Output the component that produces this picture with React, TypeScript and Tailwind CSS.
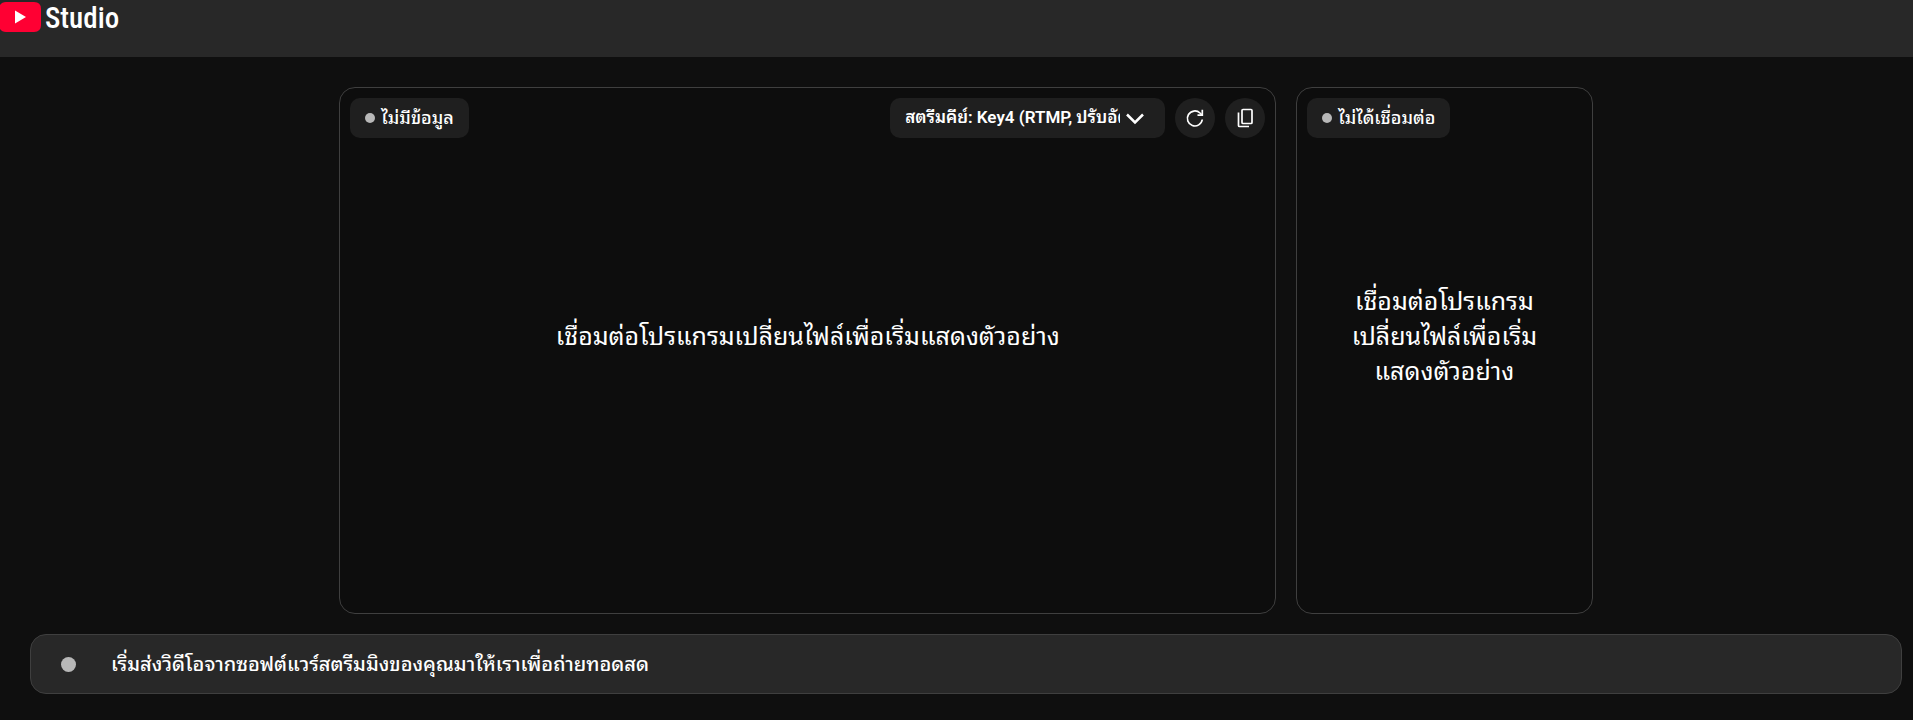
import { type ReactNode } from "react";

const PREVIEW_TEXT = "เชื่อมต่อโปรแกรมเปลี่ยนไฟล์เพื่อเริ่มแสดงตัวอย่าง";

function StatusPill({ text }: { text: string }) {
  return (
    <div className="flex h-10 items-center gap-[6px] rounded-[10px] bg-[#1f1f1f] px-[15px] text-lg font-medium whitespace-nowrap">
      <span className="size-[10px] rounded-full bg-[#b8b8b8]" />
      <span>{text}</span>
    </div>
  );
}

function RoundButton({ label, children }: { label: string; children: ReactNode }) {
  return (
    <button
      type="button"
      aria-label={label}
      className="flex size-10 items-center justify-center rounded-full bg-[#1f1f1f] hover:bg-[#2d2d2d]"
    >
      {children}
    </button>
  );
}

function StreamKeySelect() {
  return (
    <div className="relative">
      <select
        aria-label="สตรีมคีย์"
        className="h-10 w-[275px] appearance-none rounded-[10px] bg-[#1f1f1f] pr-[45px] pl-[15px] text-[17px] font-semibold text-white"
      >
        <option>สตรีมคีย์: Key4 (RTMP, ปรับอัตราบิตได้)</option>
      </select>
      <svg
        className="pointer-events-none absolute top-[10px] right-5 size-5"
        viewBox="0 0 20 20"
        fill="none"
        stroke="#fff"
        strokeWidth="2.5"
      >
        <path d="M2 6.500l8 8 8-8" />
      </svg>
    </div>
  );
}

export default function App() {
  return (
    <div className="flex h-screen min-h-[480px] flex-col bg-[#0f0f0f] font-['Roboto','Noto_Sans_Thai_Looped','Loma','Noto_Sans_Thai','Noto_Sans',sans-serif] text-white">
      <header className="h-[57px] shrink-0 bg-[#282828]">
        <a href="#" className="flex w-fit items-start gap-1" aria-label="YouTube Studio">
          <svg className="h-8 w-[41px]" viewBox="0 0 41 32">
            <path
              fill="#ff0033"
              d="M0 5Q2 2 6 2H34Q41 2 41 9V25Q41 32 34 32H6Q2 32 0 29Z"
            />
            <path fill="#fff" d="M15 10.500L26 17L15 23.500Z" />
          </svg>
          <span className="font-['Roboto_Condensed','Roboto',sans-serif] text-[29px] leading-9 font-medium">
            Studio
          </span>
        </a>
      </header>

      <main className="flex min-h-0 flex-1 flex-col gap-5 pt-[30px] pr-[11px] pb-[26px] pl-[30px]">
        <div className="flex min-h-0 flex-1 justify-center gap-5">
          <section className="flex aspect-video h-full flex-col rounded-2xl border border-[#3f3f3f] bg-[#0d0d0d] p-[10px]">
            <div className="flex items-center gap-[10px]">
              <StatusPill text="ไม่มีข้อมูล" />
              <div className="flex-1" />
              <StreamKeySelect />
              <RoundButton label="รีเซ็ต">
                <svg className="size-5" viewBox="0 0 20 20" fill="none" stroke="#fff" strokeWidth="1.700">
                  <path d="M17.300 11.500A7.500 7.500 0 1 1 15 5L17 7" />
                  <path d="M17.300 1.800V7.200H12.500" />
                </svg>
              </RoundButton>
              <RoundButton label="คัดลอก">
                <svg className="size-5" viewBox="0 0 20 20" fill="none" stroke="#fff" strokeWidth="1.700">
                  <rect x="7" y="1.500" width="10" height="14" rx="1" />
                  <path d="M3.500 4.500V17.500Q3.500 18.500 4.500 18.500H14" />
                </svg>
              </RoundButton>
            </div>
            <div className="flex flex-1 items-center justify-center pb-[68px] text-center text-[25px] leading-[35px]">
              <p>{PREVIEW_TEXT}</p>
            </div>
          </section>

          <section className="flex aspect-9/16 h-full flex-col items-start rounded-2xl border border-[#3f3f3f] bg-[#0d0d0d] p-[10px]">
            <StatusPill text="ไม่ได้เชื่อมต่อ" />
            <div className="flex flex-1 items-center justify-center self-stretch px-10 pb-[68px] text-center text-[25px] leading-[35px]">
              <p>{PREVIEW_TEXT}</p>
            </div>
          </section>
        </div>

        <div className="flex h-[60px] shrink-0 items-center gap-[35px] rounded-2xl border border-[#3f3f3f] bg-[#282828] px-[30px] text-[20px] font-medium">
          <span className="size-[15px] shrink-0 rounded-full bg-[#b8b8b8]" />
          <p>เริ่มส่งวิดีโอจากซอฟต์แวร์สตรีมมิงของคุณมาให้เราเพื่อถ่ายทอดสด</p>
        </div>
      </main>
    </div>
  );
}
